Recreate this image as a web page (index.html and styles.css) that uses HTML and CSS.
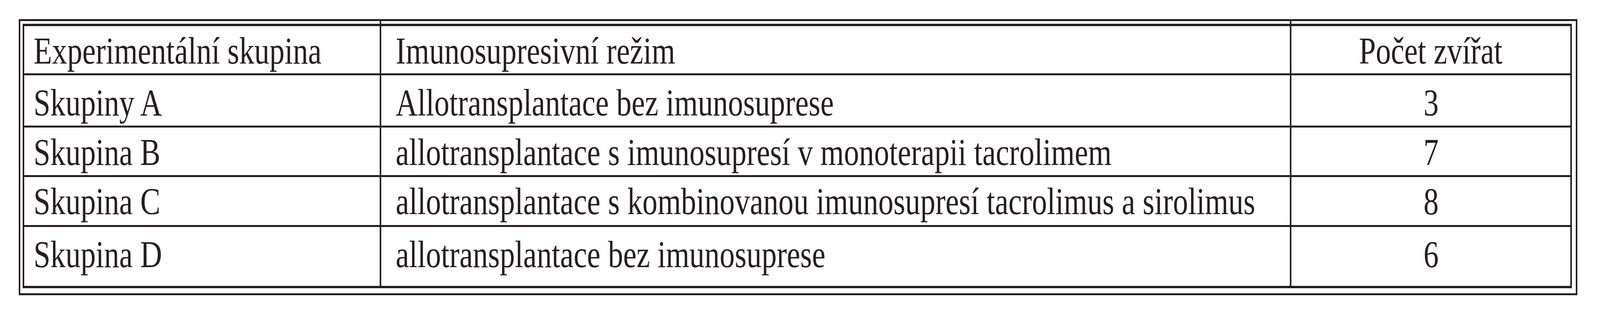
FILE: index.html
```html
<!DOCTYPE html>
<html lang="cs">
<head>
<meta charset="utf-8">
<title>Experimentální skupiny</title>
<link rel="stylesheet" href="styles.css">
</head>
<body>
<div class="frame">
  <div class="grid">
    <div class="cell head c1"><span class="txt">Experimentální skupina</span></div>
    <div class="cell head c2"><span class="txt">Imunosupresivní režim</span></div>
    <div class="cell head c3"><span class="txt">Počet zvířat</span></div>

    <div class="cell r-a c1"><span class="txt">Skupiny A</span></div>
    <div class="cell r-a c2"><span class="txt">Allotransplantace bez imunosuprese</span></div>
    <div class="cell r-a c3"><span class="txt">3</span></div>

    <div class="cell r-b c1"><span class="txt">Skupina B</span></div>
    <div class="cell r-b c2"><span class="txt">allotransplantace s imunosupresí v monoterapii tacrolimem</span></div>
    <div class="cell r-b c3"><span class="txt">7</span></div>

    <div class="cell r-c c1"><span class="txt">Skupina C</span></div>
    <div class="cell r-c c2"><span class="txt">allotransplantace s kombinovanou imunosupresí tacrolimus a sirolimus</span></div>
    <div class="cell r-c c3"><span class="txt">8</span></div>

    <div class="cell r-d last c1"><span class="txt">Skupina D</span></div>
    <div class="cell r-d last c2"><span class="txt">allotransplantace bez imunosuprese</span></div>
    <div class="cell r-d last c3"><span class="txt">6</span></div>
  </div>
</div>
</body>
</html>
```

FILE: styles.css
```css
html, body {
  margin: 0;
  padding: 0;
  background: #ffffff;
}

body {
  padding: 49px 0 0 48px;
  font-family: "Liberation Serif", "Times New Roman", serif;
  color: #231f20;
}

.frame {
  box-sizing: border-box;
  width: 3990px;
  height: 708px;
  border-style: solid;
  border-color: #231f20;
  border-width: 5px 4px 5px 4px;
  padding: 7px 10px 13px 6px;
}

.grid {
  display: grid;
  grid-template-columns: 914px 2330px 714px;
  grid-template-rows: 126px 134px 127px 128px 151px;
  border-style: solid;
  border-color: #231f20;
  border-width: 6px 4px 6px 4px;
}

.cell {
  box-sizing: border-box;
  font-size: 98px;
  line-height: 98px;
  white-space: nowrap;
  border-bottom: 5px solid #231f20;
  padding-top: 14px;
}

.cell.last {
  border-bottom: 0;
}

.txt {
  display: inline-block;
  transform: scaleX(0.7895);
  transform-origin: left center;
}

.c1 {
  border-right: 4px solid #231f20;
  padding-left: 24px;
}

.c2 {
  border-right: 4px solid #231f20;
  padding-left: 37px;
}

.c3 {
  text-align: center;
}

.c3 .txt {
  transform-origin: center center;
}

.head {
  position: relative;
  padding-top: 14px;
}

.head.c1::before,
.head.c2::before {
  content: "";
  position: absolute;
  right: -4px;
  top: -13px;
  width: 4px;
  height: 13px;
  background: #231f20;
}

.r-a {
  padding-top: 21px;
}

.r-b {
  padding-top: 14px;
}

.r-c {
  padding-top: 13px;
}

.r-d {
  padding-top: 21px;
}
```
